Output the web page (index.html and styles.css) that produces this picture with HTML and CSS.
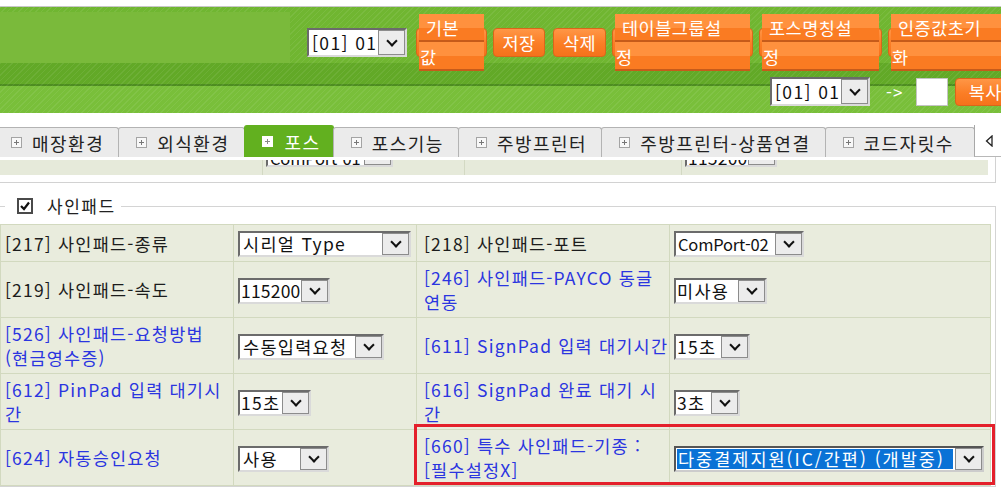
FILE: index.html
```html
<!DOCTYPE html>
<html lang="ko">
<head>
    <meta charset="UTF-8">
    <title>포스 환경설정</title>
    <link rel="stylesheet" href="styles.css">
</head>
<body>
    <div class="topline"></div>

    <div class="header">
        <div class="hrow">
            <div class="logo-box"></div>
            <span class="sel sel-head w100"><span class="sel-text">[01] 01</span><span class="sel-btn"></span></span>
            <span class="btn btn-wrap btn-first w71"><span class="face">기본<br>값</span></span>
            <span class="btn w52">저장</span>
            <span class="btn btn-gap w53">삭제</span>
            <span class="btn btn-wrap w141"><span class="face">테이블그룹설<br>정</span></span>
            <span class="btn btn-wrap w123"><span class="face">포스명칭설<br>정</span></span>
            <span class="btn btn-wrap w125"><span class="face">인증값초기<br>화</span></span>
        </div>
        <div class="hrow2">
            <span class="sel sel-head w100"><span class="sel-text">[01] 01</span><span class="sel-btn"></span></span>
            <span class="arrow-text">-&gt;</span>
            <span class="copy-box"></span>
            <span class="btn btn-copy">복사</span>
        </div>
    </div>

    <div class="tabs">
        <div class="tab"><span class="plus"></span>매장환경</div>
        <div class="tab"><span class="plus"></span>외식환경</div>
        <div class="tab on"><span class="plus"></span>포스</div>
        <div class="tab"><span class="plus"></span>포스기능</div>
        <div class="tab"><span class="plus"></span>주방프린터</div>
        <div class="tab"><span class="plus"></span>주방프린터-상품연결</div>
        <div class="tab tab-last"><span class="plus"></span>코드자릿수</div>
        <div class="tab-more">
            <svg width="8" height="12" viewBox="0 0 8 12"><path d="M7 1 L1.5 6 L7 11 Z" fill="none" stroke="#222" stroke-width="1.3"/></svg>
        </div>
    </div>

    <div class="pane">
        <div class="prev-box">
            <div class="prev-row">
                <div class="pcell p1"></div>
                <div class="pcell p2"><span class="sel w127"><span class="sel-text narrow">ComPort-01</span><span class="sel-btn"></span></span></div>
                <div class="pcell p3"></div>
                <div class="pcell p4"><span class="sel w92"><span class="sel-text num">115200</span><span class="sel-btn"></span></span></div>
            </div>
        </div>

        <fieldset class="group">
            <legend>
                <span class="chk">
                    <svg width="12" height="12" viewBox="0 0 12 12"><path d="M2 6 L5 9 L10 2.5" fill="none" stroke="#111" stroke-width="2.2"/></svg>
                </span>
                사인패드
            </legend>

            <table class="opt">
                <colgroup>
                    <col class="c1"><col class="c2"><col class="c3"><col class="c4">
                </colgroup>
                <tr class="r1">
                    <td>[217] 사인패드-종류</td>
                    <td><span class="sel w173"><span class="sel-text">시리얼 Type</span><span class="sel-btn"></span></span></td>
                    <td>[218] 사인패드-포트</td>
                    <td><span class="sel w130"><span class="sel-text narrow">ComPort-02</span><span class="sel-btn"></span></span></td>
                </tr>
                <tr>
                    <td>[219] 사인패드-속도</td>
                    <td><span class="sel w92"><span class="sel-text num">115200</span><span class="sel-btn"></span></span></td>
                    <td class="link">[246] 사인패드-PAYCO 동글<br>연동</td>
                    <td><span class="sel w93"><span class="sel-text tight">미사용</span><span class="sel-btn"></span></span></td>
                </tr>
                <tr>
                    <td class="link">[526] 사인패드-요청방법<br>(현금영수증)</td>
                    <td><span class="sel w146"><span class="sel-text">수동입력요청</span><span class="sel-btn"></span></span></td>
                    <td class="link">[611] SignPad 입력 대기시간</td>
                    <td><span class="sel w76"><span class="sel-text tight">15초</span><span class="sel-btn"></span></span></td>
                </tr>
                <tr>
                    <td class="link">[612] PinPad 입력 대기시<br>간</td>
                    <td><span class="sel w73"><span class="sel-text tight">15초</span><span class="sel-btn"></span></span></td>
                    <td class="link">[616] SignPad 완료 대기 시<br>간</td>
                    <td><span class="sel w66"><span class="sel-text tight">3초</span><span class="sel-btn"></span></span></td>
                </tr>
                <tr>
                    <td class="link">[624] 자동승인요청</td>
                    <td><span class="sel w91"><span class="sel-text">사용</span><span class="sel-btn"></span></span></td>
                    <td class="link marked">[660] 특수 사인패드-기종 :<br>[필수설정X]<span class="mark"></span></td>
                    <td><span class="sel focus w310"><span class="sel-text tight wide">다중결제지원(IC/간편) (개발중)</span><span class="sel-btn"></span></span></td>
                </tr>
            </table>
        </fieldset>
    </div>
</body>
</html>
```

FILE: styles.css
```css
html, body {
    margin: 0;
    overflow: hidden;
}
body {
    background: #fff;
    font-family: "Noto Sans CJK KR", "Noto Sans", sans-serif;
    font-size: 17px;
    color: #1c1c1c;
}
.topline {
    height: 6px;
    border-bottom: 1px solid #c8c8c8;
}

/* header */
.header {
    height: 106px;
    overflow: hidden;
    white-space: nowrap;
    background:
        repeating-linear-gradient(135deg, rgba(255,255,255,0.07) 0 1px, transparent 1px 4px),
        linear-gradient(#70b631 0 56px, #62a927 56px 77px, #4d8d20 77px 79px, #79bf3a 79px 106px);
}
.hrow {
    display: flex;
    align-items: flex-start;
    padding-top: 5px;
    height: 51px;
}
.logo-box {
    flex: none;
    width: 290px;
    height: 51px;
    background: #7aba3b;
}
.hrow .sel {
    margin: 16px 0 0 17px;
}
.hrow2 {
    display: flex;
    align-items: center;
    height: 29px;
    margin-top: 14px;
    padding-left: 770px;
}
.arrow-text {
    color: #fff;
    margin-left: 16px;
    width: 20px;
    letter-spacing: 1px;
}
.copy-box {
    flex: none;
    width: 32px;
    height: 28px;
    box-sizing: border-box;
    background: #fff;
    border: 1px solid #c4c4c4;
    margin-left: 13px;
}

/* orange buttons */
.btn {
    flex: none;
    display: inline-flex;
    align-items: center;
    justify-content: center;
    height: 29px;
    box-sizing: border-box;
    margin: 16px 0 0 6px;
    border: 1px solid #d9661a;
    border-radius: 4px;
    background: linear-gradient(#ff9646, #fb7d25 55%, #f5721b);
    color: #fff;
    font-size: 17.5px;
    letter-spacing: 0.5px;
}
.btn-first {
    margin-left: 9px;
}
.btn-gap {
    margin-left: 8px;
}
.btn-copy {
    margin: 0 0 0 7px;
    width: 60px;
    height: 28px;
}
.btn-wrap {
    justify-content: stretch;
}
.face {
    flex: 1;
    height: 57px;
    margin: 0 2px;
    padding-left: 1px;
    text-indent: 6px;
    line-height: 28.5px;
    background: repeating-linear-gradient(#ff913e 0 14px, #fa7b22 14px 26.5px, #c65b1a 26.5px 28.5px);
}
.w52 { width: 52px; }
.w53 { width: 53px; }
.w71 { width: 71px; }
.w123 { width: 123px; }
.w125 { width: 125px; }
.w141 { width: 141px; }

/* fake select boxes */
.sel {
    display: inline-flex;
    height: 26px;
    box-sizing: border-box;
    border-top: 2px solid #6b6b6b;
    border-left: 2px solid #6b6b6b;
    border-right: 2px solid #dadada;
    border-bottom: 2px solid #dadada;
    background: #fff;
    vertical-align: middle;
    white-space: nowrap;
}
.sel-head {
    height: 29px;
}
.sel-text {
    flex: 1;
    overflow: hidden;
    padding: 0 3px;
    line-height: 22px;
    font-size: 17.5px;
    letter-spacing: 1.3px;
    color: #111;
}
.sel-head .sel-text {
    line-height: 25px;
    letter-spacing: 1.4px;
}
.sel-text.tight {
    padding: 0 1px;
}
.sel-text.num {
    padding: 0 1px;
    letter-spacing: 0.2px;
}
.sel-text.narrow {
    padding: 0 2px;
    font-size: 16.5px;
    letter-spacing: -0.2px;
}
.sel-text.wide {
    letter-spacing: 2px;
}
.sel-btn {
    flex: none;
    width: 27px;
    box-sizing: border-box;
    border: 1px solid #8c8c8c;
    background: #ececec;
    display: flex;
    align-items: center;
    justify-content: center;
}
.sel-btn::after {
    content: "";
    width: 6px;
    height: 6px;
    border-right: 2px solid #111;
    border-bottom: 2px solid #111;
    transform: rotate(45deg);
    margin-top: -4px;
}
.sel.focus {
    border-color: #555 #ccc #ccc #555;
}
.sel.focus .sel-text {
    margin: 1px 2px 1px 1px;
    line-height: 20px;
    background: #0a72d6;
    color: #fff;
}
.w66 { width: 66px; }
.w73 { width: 73px; }
.w76 { width: 76px; }
.w91 { width: 91px; }
.w92 { width: 92px; }
.w93 { width: 93px; }
.w100 { width: 100px; }
.w127 { width: 127px; }
.w130 { width: 130px; }
.w146 { width: 146px; }
.w173 { width: 173px; }
.w310 { width: 310px; }

/* tabs */
.tabs {
    display: flex;
    align-items: flex-end;
    height: 32px;
    margin: 12px 0 0 -7px;
    white-space: nowrap;
}
.tab {
    display: flex;
    align-items: center;
    height: 29px;
    padding: 0 14px 0 17px;
    background: #ebebeb;
    border: 1px solid #b3b3b3;
    border-bottom: none;
    border-radius: 3px 3px 0 0;
    margin-right: -1px;
    font-size: 18px;
    letter-spacing: 1.5px;
    color: #222;
}
.tab.tab-last {
    padding-right: 20px;
}
.tab.on {
    height: 31px;
    padding-right: 12px;
    background: #62b01f;
    border-color: #62b01f;
    color: #fff;
}
.plus {
    flex: none;
    width: 9px;
    height: 9px;
    margin-right: 10px;
    border: 1px solid #a4a4a4;
    background:
        linear-gradient(#777, #777) center / 5px 1px no-repeat,
        linear-gradient(#777, #777) center / 1px 5px no-repeat,
        #f8f8f8;
}
.tab.on .plus {
    margin-right: 12px;
    border-color: #fff;
    background:
        linear-gradient(#888, #888) center / 5px 1px no-repeat,
        linear-gradient(#888, #888) center / 1px 5px no-repeat,
        #fff;
}
.tab-more {
    flex: none;
    width: 40px;
    height: 32px;
    box-sizing: border-box;
    padding-left: 10px;
    display: flex;
    align-items: center;
    background: #fff;
    border-left: 1px solid #a8a8a8;
    border-bottom: 1px solid #b8b8b8;
}

/* content */
.pane {
    padding-right: 5px;
}
.prev-box {
    border-right: 1px solid #d2d2d2;
    border-bottom: 1px solid #d2d2d2;
    padding: 3px 7px 7px 0;
}
.prev-row {
    display: flex;
    height: 15px;
    overflow: hidden;
    background: #e6eada;
}
.pcell {
    display: flex;
    align-items: flex-start;
    border-left: 1px solid #d3d9c3;
}
.pcell .sel {
    flex: none;
    margin: -19px 0 0 3px;
}
.pcell .sel-text {
    line-height: 30px;
}
.p1 { width: 262px; border-left: none; }
.p2 { width: 201px; }
.p3 { width: 216px; }
.p4 { flex: 1; }

.group {
    position: relative;
    margin: 11px 0 0 -5px;
    padding: 0 4px 0 4px;
    border: 1px solid #d4d4d4;
}
.group legend {
    display: flex;
    align-items: center;
    margin-left: 5px;
    padding: 0 5px 0 12px;
    line-height: 24px;
    letter-spacing: 1.5px;
    color: #222;
}
.chk {
    width: 16px;
    height: 16px;
    box-sizing: border-box;
    border: 2px solid #4a4a4a;
    background: #fff;
    display: flex;
    align-items: center;
    justify-content: center;
    margin-right: 14px;
}

.opt {
    width: 990px;
    margin-top: 6px;
    table-layout: fixed;
    border-collapse: collapse;
}
.opt col.c1 { width: 233px; }
.opt col.c2 { width: 183px; }
.opt col.c3 { width: 253px; }
.opt col.c4 { width: 321px; }
.opt td {
    padding: 4px 4px 3px;
    background: #e9ecdd;
    border: 1px solid #d2d9bf;
    font-size: 17.5px;
    line-height: 24px;
    letter-spacing: 1.2px;
    color: #1c1c1c;
    white-space: nowrap;
}
.opt td:nth-child(3) {
    padding-left: 7px;
}
.opt tr.r1 td {
    height: 29px;
}
.opt td.link {
    color: #2b35e0;
}
.opt td.marked {
    position: relative;
}
.mark {
    position: absolute;
    left: -3px;
    top: -6px;
    width: 581px;
    height: 61px;
    box-sizing: border-box;
    border: 3px solid #e4202b;
}
```
